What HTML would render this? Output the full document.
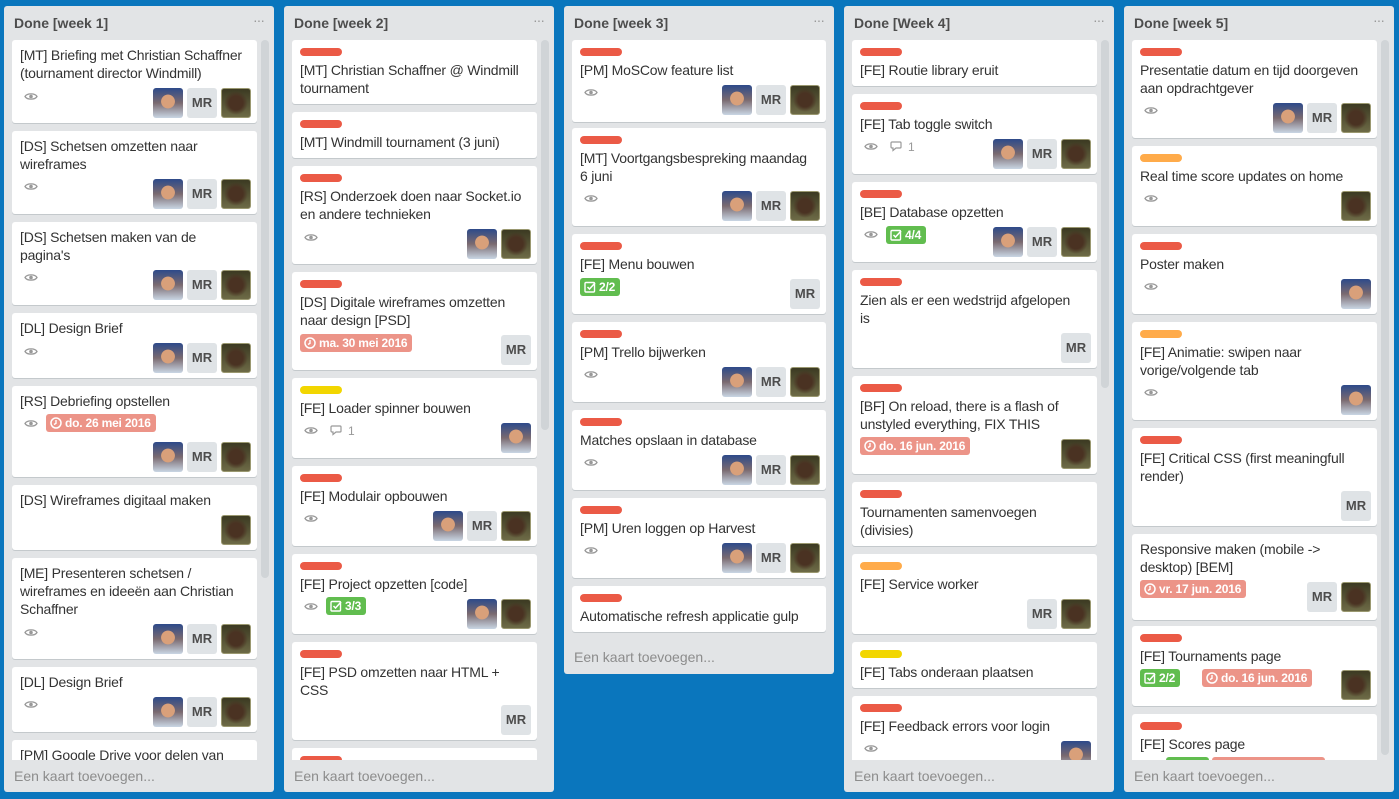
<!DOCTYPE html>
<html><head><meta charset="utf-8"><style>
*{margin:0;padding:0;box-sizing:border-box}
body{width:1399px;height:799px;background:#0a76bd;font-family:"Liberation Sans",sans-serif;position:relative;overflow:hidden}
.list{position:absolute;top:6px;width:270px;height:786px;background:#e2e4e6;border-radius:3px}
.h{position:absolute;left:10px;top:8px;font-size:14px;font-weight:bold;color:#4d4d4d;line-height:18px}
.dots{position:absolute;right:10px;top:6px;color:#999;font-size:14px;letter-spacing:-1px}
.ft{position:absolute;left:10px;font-size:14px;color:#8c8c8c;line-height:18px}
.clip{position:absolute;top:0;width:270px;height:760px;overflow:hidden}
.sb{position:absolute;left:257px;top:40px;width:8px;border-radius:4px;background:#d0d4d7}
.c{position:absolute;left:8px;width:245px;background:#fff;border-radius:3px;box-shadow:0 1px 0 #c4c9cc}
.lb{position:absolute;left:8px;top:8px;width:42px;height:8px;border-radius:4px;background:#eb5a46}
.o{background:#ffab4a}.y{background:#f2d600}
.t{position:absolute;left:8px;right:4px;top:21px;font-size:14px;line-height:18px;color:#333;letter-spacing:-0.2px}
.t.n{top:6px}
.av{position:absolute;width:30px;height:30px;border-radius:3px}
.pa{background:radial-gradient(circle at 50% 45%,#d9a07a 0 30%,transparent 32%),linear-gradient(#2d4a8a,#7a6a70 50%,#c9d6e4);}
.pc{background:radial-gradient(ellipse at 50% 50%,#4a3222 0 35%,transparent 60%),linear-gradient(#3c3a22,#6d6a46);border:1px solid #9a9870}
.mr{background:#dfe3e6;color:#4d4d4d;font-weight:bold;font-size:13px;text-align:center;line-height:30px}
.r6{right:6px}.r40{right:40px}.r74{right:74px}
.eye{position:absolute;left:12px;width:14px;height:9px}
.cm{position:absolute;left:38px;font-size:12px;color:#999;line-height:12px}
.bd{position:absolute;height:18px;border-radius:3px;color:#fff;font-weight:bold;font-size:12px;line-height:18px;padding:0 5px 0 4px;white-space:nowrap;letter-spacing:-0.2px}
.bd.g{background:#61bd4f}.bd.d{background:#ec9488}
.bd svg{vertical-align:-2px;margin-right:3px}
</style></head><body>
<svg width="0" height="0" style="position:absolute"><defs>
<symbol id="e" viewBox="0 0 14 9"><path d="M1 4.5C3 1 11 1 13 4.5C11 8 3 8 1 4.5Z" fill="none" stroke="#999" stroke-width="1.3"/><circle cx="7" cy="4.5" r="1.8" fill="#999"/></symbol>
<symbol id="k" viewBox="0 0 12 12"><circle cx="6" cy="6" r="5" fill="none" stroke="#fff" stroke-width="1.5"/><path d="M6 3V6.3L4 7.5" fill="none" stroke="#fff" stroke-width="1.4"/></symbol>
<symbol id="ch" viewBox="0 0 12 12"><rect x="1" y="1.5" width="9.5" height="9.5" rx="1" fill="none" stroke="#fff" stroke-width="1.4"/><path d="M3.5 6L5.5 8L11 2" fill="none" stroke="#fff" stroke-width="1.5"/></symbol>
<symbol id="b" viewBox="0 0 12 12"><path d="M2 2h8a1 1 0 0 1 1 1v4a1 1 0 0 1-1 1H6L3 10.5V8H2a1 1 0 0 1-1-1V3a1 1 0 0 1 1-1z" fill="none" stroke="#999" stroke-width="1.2"/></symbol>
</defs></svg>

<div class="list" style="left:4px"><div class="h">Done [week 1]</div><div class="dots">···</div><div class="ft" style="top:761px">Een kaart toevoegen...</div></div>
<div class="clip" style="left:4px">
<div class="sb" style="height:538px"></div>
<div class="c" style="top:40px;height:83px"><div class="t n">[MT] Briefing met Christian Schaffner (tournament director Windmill)</div><svg class="eye" style="top:52px"><use href="#e"/></svg><div class="av pa r74" style="top:48px"></div><div class="av mr r40" style="top:48px">MR</div><div class="av pc r6" style="top:48px"></div></div>
<div class="c" style="top:131px;height:83px"><div class="t n">[DS] Schetsen omzetten naar wireframes</div><svg class="eye" style="top:51px"><use href="#e"/></svg><div class="av pa r74" style="top:48px"></div><div class="av mr r40" style="top:48px">MR</div><div class="av pc r6" style="top:48px"></div></div>
<div class="c" style="top:222px;height:83px"><div class="t n">[DS] Schetsen maken van de<br>pagina's</div><svg class="eye" style="top:51px"><use href="#e"/></svg><div class="av pa r74" style="top:48px"></div><div class="av mr r40" style="top:48px">MR</div><div class="av pc r6" style="top:48px"></div></div>
<div class="c" style="top:313px;height:65px"><div class="t n">[DL] Design Brief</div><svg class="eye" style="top:34px"><use href="#e"/></svg><div class="av pa r74" style="top:30px"></div><div class="av mr r40" style="top:30px">MR</div><div class="av pc r6" style="top:30px"></div></div>
<div class="c" style="top:386px;height:91px"><div class="t n">[RS] Debriefing opstellen</div><svg class="eye" style="top:33px"><use href="#e"/></svg><div class="bd d" style="left:34px;top:28px"><svg width="12" height="12"><use href="#k"/></svg>do. 26 mei 2016</div><div class="av pa r74" style="top:56px"></div><div class="av mr r40" style="top:56px">MR</div><div class="av pc r6" style="top:56px"></div></div>
<div class="c" style="top:485px;height:65px"><div class="t n">[DS] Wireframes digitaal maken</div><div class="av pc r6" style="top:30px"></div></div>
<div class="c" style="top:558px;height:101px"><div class="t n">[ME] Presenteren schetsen / wireframes en ideeën aan Christian Schaffner</div><svg class="eye" style="top:70px"><use href="#e"/></svg><div class="av pa r74" style="top:66px"></div><div class="av mr r40" style="top:66px">MR</div><div class="av pc r6" style="top:66px"></div></div>
<div class="c" style="top:667px;height:65px"><div class="t n">[DL] Design Brief</div><svg class="eye" style="top:33px"><use href="#e"/></svg><div class="av pa r74" style="top:30px"></div><div class="av mr r40" style="top:30px">MR</div><div class="av pc r6" style="top:30px"></div></div>
<div class="c" style="top:740px;height:60px"><div class="t n">[PM] Google Drive voor delen van</div></div>
</div>

<div class="list" style="left:284px"><div class="h">Done [week 2]</div><div class="dots">···</div><div class="ft" style="top:761px">Een kaart toevoegen...</div></div>
<div class="clip" style="left:284px">
<div class="sb" style="height:390px"></div>
<div class="c" style="top:40px;height:64px"><div class="lb"></div><div class="t">[MT] Christian Schaffner @ Windmill tournament</div></div>
<div class="c" style="top:112px;height:46px"><div class="lb"></div><div class="t">[MT] Windmill tournament (3 juni)</div></div>
<div class="c" style="top:166px;height:98px"><div class="lb"></div><div class="t">[RS] Onderzoek doen naar Socket.io en andere technieken</div><svg class="eye" style="top:67px"><use href="#e"/></svg><div class="av pa r40" style="top:63px"></div><div class="av pc r6" style="top:63px"></div></div>
<div class="c" style="top:272px;height:98px"><div class="lb"></div><div class="t">[DS] Digitale wireframes omzetten naar design [PSD]</div><div class="bd d" style="left:8px;top:62px"><svg width="12" height="12"><use href="#k"/></svg>ma. 30 mei 2016</div><div class="av mr r6" style="top:63px">MR</div></div>
<div class="c" style="top:378px;height:80px"><div class="lb y"></div><div class="t">[FE] Loader spinner bouwen</div><svg class="eye" style="top:48px"><use href="#e"/></svg><svg class="eye" style="left:38px;top:46px;width:12px;height:12px"><use href="#b"/></svg><div class="cm" style="left:56px;top:47px">1</div><div class="av pa r6" style="top:45px"></div></div>
<div class="c" style="top:466px;height:80px"><div class="lb"></div><div class="t">[FE] Modulair opbouwen</div><svg class="eye" style="top:48px"><use href="#e"/></svg><div class="av pa r74" style="top:45px"></div><div class="av mr r40" style="top:45px">MR</div><div class="av pc r6" style="top:45px"></div></div>
<div class="c" style="top:554px;height:80px"><div class="lb"></div><div class="t">[FE] Project opzetten [code]</div><svg class="eye" style="top:48px"><use href="#e"/></svg><div class="bd g" style="left:34px;top:43px"><svg width="12" height="12"><use href="#ch"/></svg>3/3</div><div class="av pa r40" style="top:45px"></div><div class="av pc r6" style="top:45px"></div></div>
<div class="c" style="top:642px;height:98px"><div class="lb"></div><div class="t">[FE] PSD omzetten naar HTML +<br>CSS</div><div class="av mr r6" style="top:63px">MR</div></div>
<div class="c" style="top:748px;height:60px"><div class="lb"></div></div>
</div>

<div class="list" style="left:564px;height:668px"><div class="h">Done [week 3]</div><div class="dots">···</div><div class="ft" style="top:642px">Een kaart toevoegen...</div>
<div class="c" style="top:34px;height:82px;width:254px"><div class="lb"></div><div class="t">[PM] MoSCow feature list</div><svg class="eye" style="top:48px"><use href="#e"/></svg><div class="av pa r74" style="top:45px"></div><div class="av mr r40" style="top:45px">MR</div><div class="av pc r6" style="top:45px"></div></div>
<div class="c" style="top:122px;height:98px;width:254px"><div class="lb"></div><div class="t">[MT] Voortgangsbespreking maandag<br>6 juni</div><svg class="eye" style="top:66px"><use href="#e"/></svg><div class="av pa r74" style="top:63px"></div><div class="av mr r40" style="top:63px">MR</div><div class="av pc r6" style="top:63px"></div></div>
<div class="c" style="top:228px;height:80px;width:254px"><div class="lb"></div><div class="t">[FE] Menu bouwen</div><div class="bd g" style="left:8px;top:44px"><svg width="12" height="12"><use href="#ch"/></svg>2/2</div><div class="av mr r6" style="top:45px">MR</div></div>
<div class="c" style="top:316px;height:80px;width:254px"><div class="lb"></div><div class="t">[PM] Trello bijwerken</div><svg class="eye" style="top:48px"><use href="#e"/></svg><div class="av pa r74" style="top:45px"></div><div class="av mr r40" style="top:45px">MR</div><div class="av pc r6" style="top:45px"></div></div>
<div class="c" style="top:404px;height:80px;width:254px"><div class="lb"></div><div class="t">Matches opslaan in database</div><svg class="eye" style="top:48px"><use href="#e"/></svg><div class="av pa r74" style="top:45px"></div><div class="av mr r40" style="top:45px">MR</div><div class="av pc r6" style="top:45px"></div></div>
<div class="c" style="top:492px;height:80px;width:254px"><div class="lb"></div><div class="t">[PM] Uren loggen op Harvest</div><svg class="eye" style="top:48px"><use href="#e"/></svg><div class="av pa r74" style="top:45px"></div><div class="av mr r40" style="top:45px">MR</div><div class="av pc r6" style="top:45px"></div></div>
<div class="c" style="top:580px;height:46px;width:254px"><div class="lb"></div><div class="t">Automatische refresh applicatie gulp</div></div>
</div>

<div class="list" style="left:844px"><div class="h">Done [Week 4]</div><div class="dots">···</div><div class="ft" style="top:761px">Een kaart toevoegen...</div></div>
<div class="clip" style="left:844px">
<div class="sb" style="height:348px"></div>
<div class="c" style="top:40px;height:46px"><div class="lb"></div><div class="t">[FE] Routie library eruit</div></div>
<div class="c" style="top:94px;height:80px"><div class="lb"></div><div class="t">[FE] Tab toggle switch</div><svg class="eye" style="top:48px"><use href="#e"/></svg><svg class="eye" style="left:38px;top:46px;width:12px;height:12px"><use href="#b"/></svg><div class="cm" style="left:56px;top:47px">1</div><div class="av pa r74" style="top:45px"></div><div class="av mr r40" style="top:45px">MR</div><div class="av pc r6" style="top:45px"></div></div>
<div class="c" style="top:182px;height:80px"><div class="lb"></div><div class="t">[BE] Database opzetten</div><svg class="eye" style="top:48px"><use href="#e"/></svg><div class="bd g" style="left:34px;top:44px"><svg width="12" height="12"><use href="#ch"/></svg>4/4</div><div class="av pa r74" style="top:45px"></div><div class="av mr r40" style="top:45px">MR</div><div class="av pc r6" style="top:45px"></div></div>
<div class="c" style="top:270px;height:98px"><div class="lb"></div><div class="t">Zien als er een wedstrijd afgelopen<br>is</div><div class="av mr r6" style="top:63px">MR</div></div>
<div class="c" style="top:376px;height:98px"><div class="lb"></div><div class="t">[BF] On reload, there is a flash of unstyled everything, FIX THIS</div><div class="bd d" style="left:8px;top:61px"><svg width="12" height="12"><use href="#k"/></svg>do. 16 jun. 2016</div><div class="av pc r6" style="top:63px"></div></div>
<div class="c" style="top:482px;height:64px"><div class="lb"></div><div class="t">Tournamenten samenvoegen (divisies)</div></div>
<div class="c" style="top:554px;height:80px"><div class="lb o"></div><div class="t">[FE] Service worker</div><div class="av mr r40" style="top:45px">MR</div><div class="av pc r6" style="top:45px"></div></div>
<div class="c" style="top:642px;height:46px"><div class="lb y"></div><div class="t">[FE] Tabs onderaan plaatsen</div></div>
<div class="c" style="top:696px;height:80px"><div class="lb"></div><div class="t">[FE] Feedback errors voor login</div><svg class="eye" style="top:48px"><use href="#e"/></svg><div class="av pa r6" style="top:45px"></div></div>
</div>

<div class="list" style="left:1124px"><div class="h">Done [week 5]</div><div class="dots">···</div><div class="ft" style="top:761px">Een kaart toevoegen...</div></div>
<div class="clip" style="left:1124px">
<div class="sb" style="height:715px"></div>
<div class="c" style="top:40px;height:98px"><div class="lb"></div><div class="t">Presentatie datum en tijd doorgeven aan opdrachtgever</div><svg class="eye" style="top:66px"><use href="#e"/></svg><div class="av pa r74" style="top:63px"></div><div class="av mr r40" style="top:63px">MR</div><div class="av pc r6" style="top:63px"></div></div>
<div class="c" style="top:146px;height:80px"><div class="lb o"></div><div class="t">Real time score updates on home</div><svg class="eye" style="top:48px"><use href="#e"/></svg><div class="av pc r6" style="top:45px"></div></div>
<div class="c" style="top:234px;height:80px"><div class="lb"></div><div class="t">Poster maken</div><svg class="eye" style="top:48px"><use href="#e"/></svg><div class="av pa r6" style="top:45px"></div></div>
<div class="c" style="top:322px;height:98px"><div class="lb o"></div><div class="t">[FE] Animatie: swipen naar vorige/volgende tab</div><svg class="eye" style="top:66px"><use href="#e"/></svg><div class="av pa r6" style="top:63px"></div></div>
<div class="c" style="top:428px;height:98px"><div class="lb"></div><div class="t">[FE] Critical CSS (first meaningfull render)</div><div class="av mr r6" style="top:63px">MR</div></div>
<div class="c" style="top:534px;height:86px"><div class="t n">Responsive maken (mobile -&gt; desktop) [BEM]</div><div class="bd d" style="left:8px;top:46px"><svg width="12" height="12"><use href="#k"/></svg>vr. 17 jun. 2016</div><div class="av mr r40" style="top:48px">MR</div><div class="av pc r6" style="top:48px"></div></div>
<div class="c" style="top:626px;height:80px"><div class="lb"></div><div class="t">[FE] Tournaments page</div><div class="bd g" style="left:8px;top:43px"><svg width="12" height="12"><use href="#ch"/></svg>2/2</div><div class="bd d" style="left:70px;top:43px"><svg width="12" height="12"><use href="#k"/></svg>do. 16 jun. 2016</div><div class="av pc r6" style="top:44px"></div></div>
<div class="c" style="top:714px;height:80px"><div class="lb"></div><div class="t">[FE] Scores page</div><div class="bd g" style="left:34px;top:43px;width:43px"></div><div class="bd d" style="left:80px;top:43px;width:113px"></div></div>
</div>
</body></html>
